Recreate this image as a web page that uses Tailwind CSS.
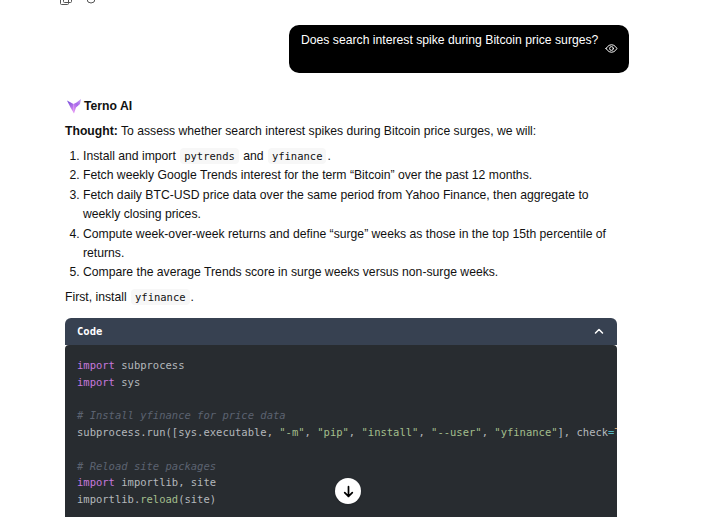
<!DOCTYPE html>
<html lang="en">
<head>
  <meta charset="UTF-8" />
  <title>Terno AI</title>
  <script src="https://cdn.jsdelivr.net/npm/@tailwindcss/browser@4"></script>
</head>
<body class="bg-white h-[527px] w-[719px] overflow-hidden relative font-['Liberation_Sans',sans-serif] text-[#111]">
  <div class="h-[5px] pl-[60px] flex gap-[13px] overflow-hidden text-[#555]">
    <svg class="w-[12px] h-[12px] -mt-[7px]" viewBox="0 0 12 12" fill="none" stroke="currentColor"><rect x="0.5" y="2.5" width="8" height="9" rx="1"/><rect x="3.5" y="0.5" width="8" height="9" rx="1"/></svg>
    <svg class="w-[12px] h-[12px] -mt-[7px]" viewBox="0 0 12 12" fill="none" stroke="currentColor"><circle cx="6" cy="6" r="4"/></svg>
  </div>

  <div class="flex justify-end pr-[90px] mt-[20px]">
    <div class="bg-black text-white rounded-[10px] w-[340px] h-[48px] pl-[12px] pr-[11px] pt-[7px] text-[12.2px] leading-[17px]">
      <p>Does search interest spike during Bitcoin price surges?</p>
      <div class="flex justify-end -mt-[7px]">
        <svg class="w-[13px] h-[13px]" viewBox="0 0 24 24" fill="none" stroke="currentColor" stroke-width="1.800" stroke-linecap="round" stroke-linejoin="round"><path d="M2 12s3.600-7 10-7 10 7 10 7-3.600 7-10 7-10-7-10-7Z"/><circle cx="12" cy="12" r="3.500"/></svg>
      </div>
    </div>
  </div>

  <div class="ml-[65px] w-[552px] mt-[25px] text-[12.2px] leading-[17px]">
    <div class="flex items-center gap-[3px] font-bold h-[17px] pl-[2px]">
      <svg class="w-[14px] h-[15px]" viewBox="0 0 14 15">
        <defs>
          <linearGradient id="wing" x1="0" y1="0" x2="0.4" y2="1"><stop offset="0" stop-color="#6d48d8"/><stop offset="1" stop-color="#d98af2"/></linearGradient>
          <linearGradient id="wingRight" x1="1" y1="0" x2="0.2" y2="1"><stop offset="0" stop-color="#c9a4f5"/><stop offset="0.5" stop-color="#a868ea"/><stop offset="1" stop-color="#e394f2"/></linearGradient>
        </defs>
        <path d="M0 1.500 L6.500 5 L7 14.500 L3.500 8.500Z" fill="url(#wing)"/>
        <path d="M14 0 L9.500 3.500 L6.500 5 L7 14.500 L9 8.500 L13 5Z" fill="url(#wingRight)"/>
      </svg>
      <span>Terno AI</span>
    </div>
    <p class="mt-[8px]"><strong>Thought:</strong> To assess whether search interest spikes during Bitcoin price surges, we will:</p>
    <ol class="list-decimal pl-[18px] mt-[7px] leading-[19.4px]">
      <li>Install and import <code class="font-['DejaVu_Sans_Mono',monospace] text-[10.500px] bg-[#f7f7f7] rounded px-[4px] py-[2px] mx-[1px]">pytrends</code> and <code class="font-['DejaVu_Sans_Mono',monospace] text-[10.500px] bg-[#f7f7f7] rounded px-[4px] py-[2px] mx-[1px]">yfinance</code>.</li>
      <li>Fetch weekly Google Trends interest for the term “Bitcoin” over the past 12 months.</li>
      <li>Fetch daily BTC-USD price data over the same period from Yahoo Finance, then aggregate to weekly closing prices.</li>
      <li>Compute week-over-week returns and define “surge” weeks as those in the top 15th percentile of returns.</li>
      <li>Compare the average Trends score in surge weeks versus non-surge weeks.</li>
    </ol>
    <p class="mt-[6px]">First, install <code class="font-['DejaVu_Sans_Mono',monospace] text-[10.500px] bg-[#f7f7f7] rounded px-[4px] py-[2px] mx-[1px]">yfinance</code>.</p>

    <div class="mt-[12px] bg-[#374151] rounded-t-[6px] h-[27px] px-[12px] flex items-center justify-between text-white font-['DejaVu_Sans_Mono',monospace] font-bold text-[10.500px]">
      <span>Code</span>
      <svg class="w-[12px] h-[12px]" viewBox="0 0 24 24" fill="none" stroke="currentColor" stroke-width="3" stroke-linecap="round" stroke-linejoin="round"><path d="m5 16 7-7 7 7"/></svg>
    </div>
    <pre class="bg-[#282c30] rounded-t-[4px] h-[172px] overflow-hidden pl-[12px] pt-[12px] font-['DejaVu_Sans_Mono',monospace] text-[10.500px] leading-[16.800px] text-[#b4b8bc]"><span class="text-[#c678dd]">import</span> subprocess
<span class="text-[#c678dd]">import</span> sys

<span class="italic text-[#5c6370]"># Install yfinance for price data</span>
subprocess.run([sys.executable, <span class="text-[#a3be8c]">"-m"</span>, <span class="text-[#a3be8c]">"pip"</span>, <span class="text-[#a3be8c]">"install"</span>, <span class="text-[#a3be8c]">"--user"</span>, <span class="text-[#a3be8c]">"yfinance"</span>], check<span class="text-[#56b6c2]">=</span><span class="text-[#d19a66]">True</span>)

<span class="italic text-[#5c6370]"># Reload site packages</span>
<span class="text-[#c678dd]">import</span> importlib, site
importlib.<span class="text-[#a3be8c]">reload</span>(site)</pre>
  </div>

  <button class="absolute left-[335px] top-[478px] w-[26px] h-[26px] rounded-full bg-white flex items-center justify-center shadow">
    <svg class="w-[13px] h-[13px] text-black" viewBox="0 0 24 24" fill="none" stroke="currentColor" stroke-width="3.200" stroke-linecap="round" stroke-linejoin="round"><path d="M12 3v18M5 14l7 7 7-7"/></svg>
  </button>
</body>
</html>
